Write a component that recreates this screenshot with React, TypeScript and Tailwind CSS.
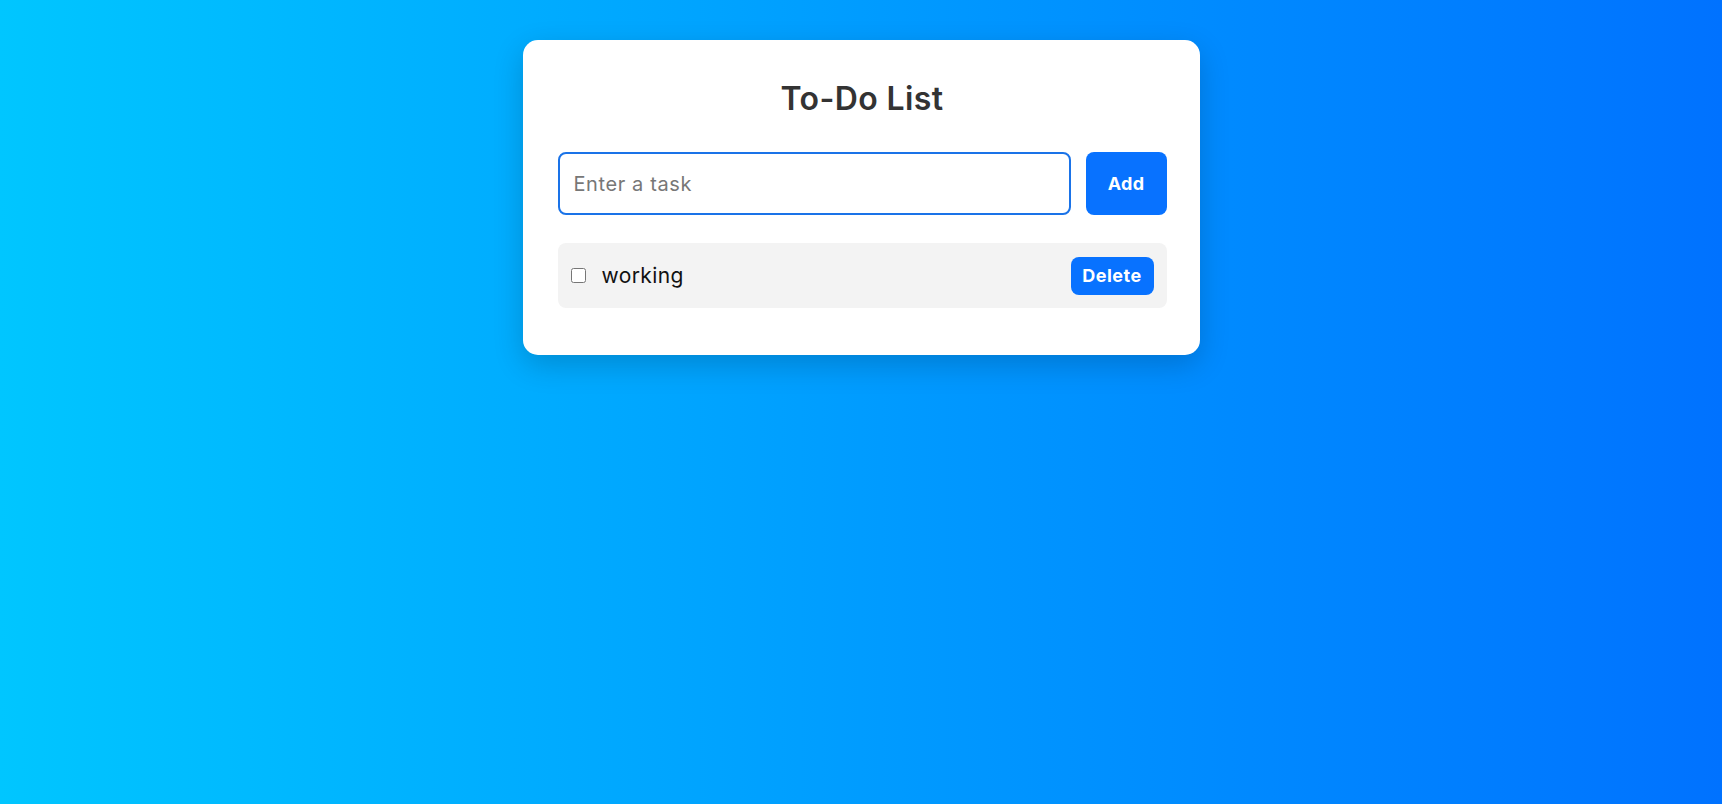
import { useState } from 'react';

type Task = { id: number; text: string; done: boolean };

export default function App() {
  const [tasks, setTasks] = useState<Task[]>([{ id: 1, text: 'working', done: false }]);
  const [draft, setDraft] = useState('');

  const addTask = () => {
    const text = draft.trim();
    if (!text) return;
    setTasks([...tasks, { id: Date.now(), text, done: false }]);
    setDraft('');
  };

  return (
    <div className="min-h-screen w-full bg-[linear-gradient(to_right,#00c6ff,#0072ff)] font-['Inter',sans-serif] pt-[40px]">
      <div className="mx-auto w-[677px] rounded-[15px] bg-white pt-[35px] pb-[47px] pl-[35px] pr-[33px] shadow-[0_10px_30px_rgba(0,0,0,0.18)]">
        <h2 className="text-center text-[32px] leading-[48px] font-semibold text-[#333] tracking-[0.4px]">To-Do List</h2>

        {/* input row */}
        <div className="mt-[29px] flex gap-[15px]">
          <input
            value={draft}
            onChange={(e) => setDraft(e.target.value)}
            placeholder="Enter a task"
            className="h-[63px] flex-1 rounded-[8px] border-2 border-[#1a73e8] px-[14px] text-[20px] tracking-[0.6px] text-[#222] placeholder:text-[#777] outline-none"
          />
          <button
            onClick={addTask}
            className="h-[63px] w-[81px] rounded-[8px] bg-[#0872ff] text-[18px] tracking-[0.3px] font-bold text-white"
          >
            Add
          </button>
        </div>

        {/* task list */}
        <ul className="mt-[28px] flex flex-col gap-[10px]">
          {tasks.map((t) => (
            <li key={t.id} className="flex h-[65px] items-center rounded-[8px] bg-[#f3f3f3] pl-[13px] pr-[13px]">
              <input
                type="checkbox"
                checked={t.done}
                onChange={() => setTasks(tasks.map((x) => (x.id === t.id ? { ...x, done: !x.done } : x)))}
                className="h-[15px] w-[15px] accent-[#0072ff]"
              />
              <span className={`ml-[16px] flex-1 text-[21px] tracking-[0.4px] text-[#111] ${t.done ? 'line-through' : ''}`}>{t.text}</span>
              <button
                onClick={() => setTasks(tasks.filter((x) => x.id !== t.id))}
                className="h-[38px] w-[83px] rounded-[8px] bg-[#0872ff] text-[18px] tracking-[0.5px] font-bold text-white"
              >
                Delete
              </button>
            </li>
          ))}
        </ul>
      </div>
    </div>
  );
}
